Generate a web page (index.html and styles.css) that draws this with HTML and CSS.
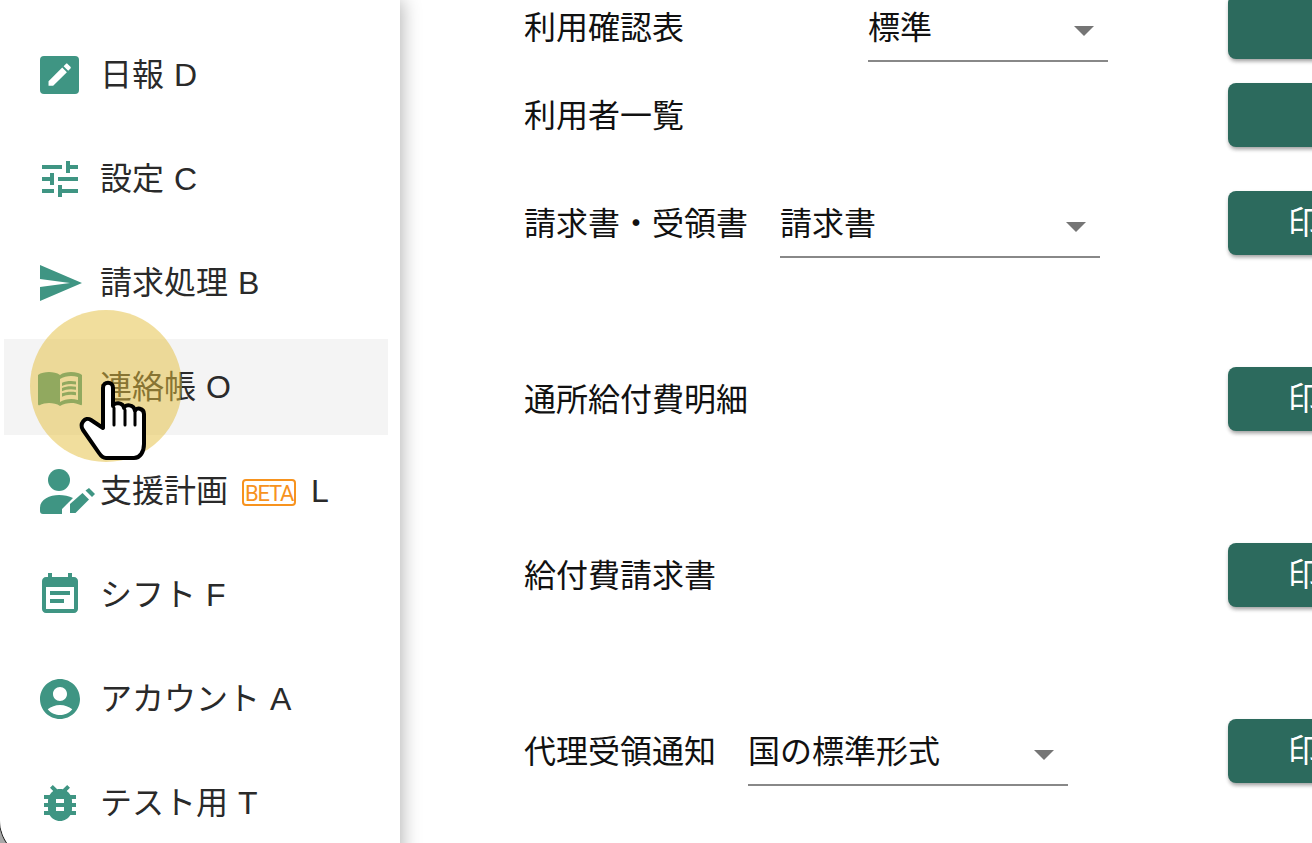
FILE: index.html
```html
<!DOCTYPE html>
<html lang="ja">

<head>
    <meta charset="UTF-8">
    <title>帳票</title>
    <link rel="stylesheet" href="styles.css">
</head>

<body>
    <div class="window">
        <nav class="sidebar">
            <a class="nav-item">
                <svg class="nav-icon" viewBox="0 0 24 24">
                    <rect x="2" y="2.5" width="19.5" height="19" rx="2"></rect>
                    <path fill="#fff" transform="translate(4.4 4.4) scale(.62)" d="M3 17.25V21h3.75L17.81 9.94l-3.75-3.75L3 17.25zM20.71 7.04c.39-.39.39-1.02 0-1.41l-2.34-2.34c-.39-.39-1.02-.39-1.41 0l-1.83 1.83 3.75 3.75 1.83-1.83z"></path>
                </svg>
                <span>日報 D</span>
            </a>
            <a class="nav-item">
                <svg class="nav-icon" viewBox="0 0 24 24">
                    <path d="M3 17v2h6v-2H3zM3 5v2h10V5H3zm10 16v-2h8v-2h-8v-2h-2v6h2zM7 9v2H3v2h4v2h2V9H7zm14 4v-2H11v2h10zm-6-4h2V7h4V5h-4V3h-2v6z"></path>
                </svg>
                <span>設定 C</span>
            </a>
            <a class="nav-item">
                <svg class="nav-icon" viewBox="0 0 24 24">
                    <path d="M2.01 21L23 12 2.01 3 2 10l15 2-15 2z"></path>
                </svg>
                <span>請求処理 B</span>
            </a>
            <a class="nav-item nav-item-hover">
                <svg class="nav-icon" viewBox="0 0 24 24">
                    <path d="M21 5c-1.11-.35-2.33-.5-3.5-.5-1.95 0-4.05.4-5.5 1.5-1.45-1.1-3.55-1.5-5.5-1.5S2.45 4.9 1 6v14.65c0 .25.25.5.5.5.1 0 .15-.05.25-.05C3.1 20.45 5.05 20 6.5 20c1.95 0 4.05.4 5.5 1.5 1.35-.85 3.8-1.5 5.5-1.5 1.65 0 3.35.3 4.75 1.05.1.05.15.05.25.05.25 0 .5-.25.5-.5V6c-.6-.45-1.25-.75-2-1zm0 13.5c-1.1-.35-2.3-.5-3.5-.5-1.7 0-4.15.65-5.5 1.5V8c1.35-.85 3.8-1.5 5.5-1.5 1.2 0 2.4.15 3.5.5v11.5z"></path>
                    <path d="M17.5 10.5c.88 0 1.73.09 2.5.26V9.24c-.79-.15-1.64-.24-2.5-.24-1.7 0-3.24.29-4.5.83v1.66c1.13-.64 2.7-.99 4.5-.99zM13 12.49v1.66c1.13-.64 2.7-.99 4.5-.99.88 0 1.73.09 2.5.26V11.9c-.79-.15-1.64-.24-2.5-.24-1.7 0-3.24.3-4.5.83zM17.5 14.33c-1.7 0-3.24.29-4.5.83v1.66c1.13-.64 2.7-.99 4.5-.99.88 0 1.73.09 2.5.26v-1.52c-.79-.16-1.64-.24-2.5-.24z"></path>
                </svg>
                <span>連絡帳 O</span>
            </a>
            <a class="nav-item">
                <svg class="nav-icon" viewBox="0 0 48 48">
                    <circle cx="23" cy="13" r="11"></circle>
                    <path d="M4 41C4 32 14 28 23 28C28 28 33 29 37 31L26 42V47H7C5 47 4 46 4 44Z"></path>
                    <path d="M34 37L46.5 26L53 32.5L39.500 46H34Z"></path>
                    <path d="M49.500 23.500L53 21L59 27L56 30Z"></path>
                </svg>
                <span>支援計画</span>
                <span class="beta">BETA</span>
                <span>L</span>
            </a>
            <a class="nav-item">
                <svg class="nav-icon" viewBox="0 0 24 24">
                    <path d="M17 10H7v2h10v-2zm2-7h-1V1h-2v2H8V1H6v2H5c-1.11 0-1.99.9-1.99 2L3 19c0 1.1.89 2 2 2h14c1.1 0 2-.9 2-2V5c0-1.1-.9-2-2-2zm0 16H5V8h14v11zm-5-5H7v2h7v-2z"></path>
                </svg>
                <span>シフト F</span>
            </a>
            <a class="nav-item">
                <svg class="nav-icon" viewBox="0 0 24 24">
                    <path d="M12 2C6.48 2 2 6.48 2 12s4.48 10 10 10 10-4.48 10-10S17.52 2 12 2zm0 4c1.93 0 3.5 1.57 3.5 3.5S13.93 13 12 13s-3.5-1.57-3.5-3.5S10.07 6 12 6zm0 14c-2.03 0-4.43-.82-6.14-2.88C7.55 15.8 9.68 15 12 15s4.45.8 6.14 2.12C16.43 19.18 14.03 20 12 20z"></path>
                </svg>
                <span>アカウント A</span>
            </a>
            <a class="nav-item">
                <svg class="nav-icon" viewBox="0 0 24 24">
                    <path d="M20 8h-2.81c-.45-.78-1.07-1.45-1.82-1.96L17 4.41 15.59 3l-2.17 2.17C12.96 5.06 12.49 5 12 5c-.49 0-.96.06-1.41.17L8.41 3 7 4.41l1.62 1.63C7.88 6.55 7.26 7.22 6.81 8H4v2h2.09c-.05.33-.09.66-.09 1v1H4v2h2v1c0 .34.04.67.09 1H4v2h2.81c1.04 1.79 2.97 3 5.19 3s4.15-1.21 5.19-3H20v-2h-2.09c.05-.33.09-.66.09-1v-1h2v-2h-2v-1c0-.34-.04-.67-.09-1H20V8zm-6 8h-4v-2h4v2zm0-4h-4v-2h4v2z"></path>
                </svg>
                <span>テスト用 T</span>
            </a>
        </nav>

        <main class="content">
            <div class="print-form">
                <div class="form-row row-first">
                    <span class="row-label label-wide">利用確認表</span>
                    <div class="select select-short"><span>標準</span><i class="arrow"></i></div>
                    <button class="print-btn"></button>
                </div>
                <div class="form-row row-second">
                    <span class="row-label">利用者一覧</span>
                    <button class="print-btn"></button>
                </div>
                <div class="form-row">
                    <span class="row-label">請求書・受領書</span>
                    <div class="select"><span>請求書</span><i class="arrow"></i></div>
                    <button class="print-btn">印刷</button>
                </div>
                <div class="form-row">
                    <span class="row-label">通所給付費明細</span>
                    <button class="print-btn">印刷</button>
                </div>
                <div class="form-row">
                    <span class="row-label">給付費請求書</span>
                    <button class="print-btn">印刷</button>
                </div>
                <div class="form-row">
                    <span class="row-label">代理受領通知</span>
                    <div class="select"><span>国の標準形式</span><i class="arrow"></i></div>
                    <button class="print-btn">印刷</button>
                </div>
            </div>
        </main>

        <!-- pointer highlight from the screen recording -->
        <div class="pointer-spot"></div>
        <svg class="pointer-hand" viewBox="76 376 74 88">
            <path d="M103 428V388C103 381 113 381 113 388V406C114 402 123 402 124 408C125 404 134 404 135 411C136 407 144 408 144 414V444C144 452 140 458 134 458H106C103 458 101 456 99 453L83 430C79 424 85 416 91 420Z"></path>
            <path d="M114 408V425M125 410V425M135 413V425"></path>
        </svg>
    </div>
</body>

</html>
```

FILE: styles.css
```css
html,
body {
    height: 100%;
    margin: 0;
    overflow: hidden;
}

body {
    background: #a8a8a8;
    font-family: "Liberation Sans", "Noto Sans CJK JP", sans-serif;
    font-size: 32px;
    color: #2a2a2a;
}

/* window corner shows at the bottom left */
.window {
    position: relative;
    display: flex;
    height: 860px;
    background: #fff;
    border-bottom-left-radius: 40px;
    box-shadow: 0 0 0 1px #222;
    overflow: hidden;
}

.sidebar {
    flex: none;
    width: 384px;
    padding: 27px 12px 0 4px;
    background: #fff;
    box-shadow: 2px 0 18px rgba(0, 0, 0, 0.3);
    z-index: 1;
}

.nav-item {
    display: flex;
    align-items: center;
    height: 96px;
    margin-bottom: 8px;
    padding-left: 32px;
    line-height: 48px;
    white-space: pre;
    word-spacing: 1px;
}

.nav-item-hover {
    background: #f4f4f4;
}

.nav-icon {
    flex: none;
    width: 48px;
    height: 48px;
    margin-right: 16px;
    fill: #3f9583;
    overflow: visible;
}

.beta {
    margin: 2px 15px 0 14px;
    width: 50px;
    height: 23px;
    border: 2px solid #f7931e;
    border-radius: 4px;
    color: #f7931e;
    font-family: Roboto, sans-serif;
    font-size: 22px;
    line-height: 25px;
    letter-spacing: -1.2px;
    text-align: center;
}

.content {
    flex: 1;
    min-width: 0;
    overflow: hidden;
}

.print-form {
    width: 864px;
    margin: -5px 0 0 124px;
}

.form-row {
    display: flex;
    align-items: center;
    height: 64px;
    margin-bottom: 112px;
    line-height: 48px;
    color: #111;
}

.row-first {
    margin-bottom: 24px;
}

.row-second {
    margin-bottom: 44px;
}

.row-label {
    margin-right: 32px;
    padding-top: 1px;
}

.label-wide {
    width: 344px;
    margin-right: 0;
}

.select {
    flex: none;
    display: flex;
    align-items: flex-end;
    justify-content: space-between;
    box-sizing: border-box;
    width: 320px;
    height: 70px;
    padding: 0 14px 8px 0;
    border-bottom: 2px solid #888;
}

.select-short {
    width: 240px;
}

.arrow {
    width: 0;
    height: 0;
    margin-bottom: 16px;
    border-left: 10px solid transparent;
    border-right: 10px solid transparent;
    border-top: 10px solid #757575;
}

.print-btn {
    flex: none;
    width: 160px;
    height: 64px;
    margin-left: auto;
    padding: 0 0 0 60px;
    border: 0;
    border-radius: 8px;
    background: #2c6a5d;
    box-shadow: 0 4px 4px -2px rgba(0, 0, 0, 0.3), 0 2px 4px rgba(0, 0, 0, 0.14);
    color: #fff;
    font: inherit;
    text-align: left;
    white-space: nowrap;
}

.pointer-spot {
    position: absolute;
    left: 30px;
    top: 310px;
    width: 152px;
    height: 152px;
    border-radius: 50%;
    background: rgba(228, 190, 60, 0.5);
    z-index: 2;
}

.pointer-hand {
    position: absolute;
    left: 76px;
    top: 376px;
    width: 74px;
    height: 88px;
    fill: #fff;
    stroke: #000;
    stroke-width: 4;
    stroke-linejoin: round;
    stroke-linecap: round;
    z-index: 3;
}

.pointer-hand path + path {
    fill: none;
    stroke-width: 3;
}
```
